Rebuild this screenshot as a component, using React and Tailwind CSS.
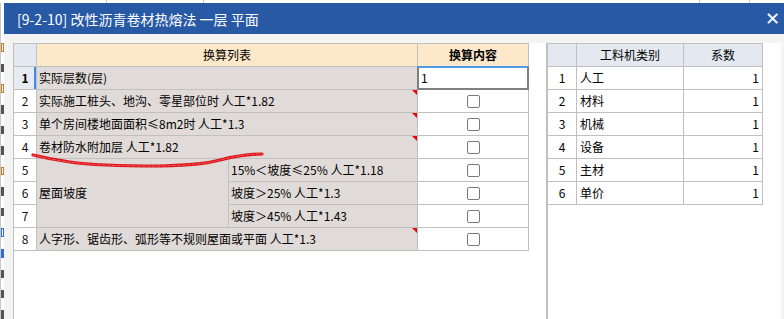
import React from "react";

const leftRows = [
  { n: 1, text: "实际层数(层)", input: true },
  { n: 2, text: "实际施工桩头、地沟、零星部位时 人工*1.82", tri: true },
  { n: 3, text: "单个房间楼地面面积≤8m2时 人工*1.3", tri: true },
  { n: 4, text: "卷材防水附加层 人工*1.82", tri: true },
];

const rightRows = [
  ["1", "人工", "1"],
  ["2", "材料", "1"],
  ["3", "机械", "1"],
  ["4", "设备", "1"],
  ["5", "主材", "1"],
  ["6", "单价", "1"],
];

function Check() {
  return <div className="w-[13px] h-[13px] border border-[#7a7a7a] rounded-[2px] bg-white" />;
}

function Tri() {
  return (
    <span className="absolute top-0 right-0 w-0 h-0 border-l-[5px] border-l-transparent border-t-[5px] border-t-[#f00000]" />
  );
}

function NumCell({ n, sel }) {
  return (
    <div
      className={
        sel
          ? "relative flex items-center justify-center bg-[#e6eaf1] font-bold text-[12px] text-black"
          : "flex items-center justify-center bg-white text-[12px] text-[#111]"
      }
    >
      {n}
      {sel && <span className="absolute right-0 top-0 bottom-0 w-[2px] bg-[#3d8ee6]" />}
    </div>
  );
}

export default function App() {
  return (
    <div className="relative w-[784px] h-[319px] overflow-hidden bg-white font-['Noto_Sans_CJK_SC',sans-serif] text-black">
      {/* background window strip */}
      <div className="h-[3px] bg-white flex">
        <div className="w-[107px] border-r border-[#c8c8c8]" />
        <div className="w-[97px] border-r border-[#c8c8c8]" />
        <div className="w-[496px] border-r border-[#c8c8c8]" />
        <div className="w-[50px] border-r border-[#c8c8c8]" />
      </div>
      <div className="flex h-[316px]">
        {/* background window left scraps */}
        <div className="w-[4px] bg-white flex flex-col items-start pt-[40px] gap-[12px] border-l border-[#c8c8c8]">
          <span className="w-[3px] h-[10px] border border-[#c57a2a]" />
          <span className="w-[3px] h-[10px] bg-[#555]" />
          <span className="w-[3px] h-[10px] border border-[#c57a2a]" />
          <span className="w-[3px] h-[10px] bg-[#555]" />
          <span className="w-[3px] h-[10px] bg-[#555]" />
          <span className="w-[3px] h-[10px] bg-[#555]" />
          <span className="w-[3px] h-[10px] border border-[#c57a2a]" />
          <span className="w-[3px] h-[10px] bg-[#555]" />
          <span className="w-[3px] h-[10px] bg-[#555]" />
          <span className="w-[3px] h-[10px] border border-[#2a6fd0]" />
          <span className="w-[3px] h-[10px] bg-[#2a6fd0]" />
          <span className="w-[3px] h-[10px] bg-[#555]" />
          <span className="w-[3px] h-[10px] bg-[#555]" />
          <span className="w-[3px] h-[10px] bg-[#555]" />
        </div>

        {/* dialog */}
        <div className="flex-1 flex flex-col">
          <div className="h-[31px] bg-[#2859a5] flex items-center justify-between pl-[13px] pr-[4px] text-white">
            <span className="text-[14px] leading-none">[9-2-10] 改性沥青卷材热熔法 一层 平面</span>
            <span className="text-[18px] leading-none font-['DejaVu_Sans',sans-serif]">✕</span>
          </div>
          <div className="flex-1 bg-[#f3f3f3] pt-[9px] pl-[9px] flex">
            {/* left panel */}
            <div className="w-[533px] bg-white border-l border-[#c0c0c0]">
              <div className="grid grid-cols-[22px_191px_188px_110px] grid-rows-[repeat(9,22px)] gap-px bg-[#c0c0c0] border-t border-r border-b border-[#c0c0c0] w-[515px] text-[12px]">
                {/* header */}
                <div className="bg-[#e4e9f1]" />
                <div className="col-span-2 bg-[#fee8ca] flex items-center justify-center">换算列表</div>
                <div className="bg-[#fee8ca] flex items-center justify-center font-bold">换算内容</div>

                {leftRows.map((r) => (
                  <React.Fragment key={r.n}>
                    <NumCell n={r.n} sel={r.n === 1} />
                    <div className="relative col-span-2 bg-[#e0dbd8] flex items-center pl-[2px] whitespace-nowrap">
                      {r.text}
                      {r.tri && <Tri />}
                    </div>
                    {r.input ? (
                      <div className="bg-white border-2 border-[#7f7f7f] border-t-[#4d9be6] flex items-center pl-[2px] -m-px">
                        1
                      </div>
                    ) : (
                      <div className="bg-white flex items-center justify-center">
                        <Check />
                      </div>
                    )}
                  </React.Fragment>
                ))}

                {/* rows 5-7 */}
                <NumCell n={5} />
                <div className="row-span-3 bg-[#e0dbd8] flex items-center pl-[2px]">屋面坡度</div>
                <div className="bg-[#e0dbd8] flex items-center pl-[2px] whitespace-nowrap">15%＜坡度≤25% 人工*1.18</div>
                <div className="bg-white flex items-center justify-center">
                  <Check />
                </div>
                <NumCell n={6} />
                <div className="bg-[#e0dbd8] flex items-center pl-[2px] whitespace-nowrap">坡度＞25% 人工*1.3</div>
                <div className="bg-white flex items-center justify-center">
                  <Check />
                </div>
                <NumCell n={7} />
                <div className="bg-[#e0dbd8] flex items-center pl-[2px] whitespace-nowrap">坡度＞45% 人工*1.43</div>
                <div className="bg-white flex items-center justify-center">
                  <Check />
                </div>

                {/* row 8 */}
                <NumCell n={8} />
                <div className="relative col-span-2 bg-[#e0dbd8] flex items-center pl-[2px] whitespace-nowrap">
                  人字形、锯齿形、弧形等不规则屋面或平面 人工*1.3
                  <Tri />
                </div>
                <div className="bg-white flex items-center justify-center">
                  <Check />
                </div>
              </div>
            </div>

            {/* splitter */}
            <div className="w-[2px] bg-[#c0c0c0]" />

            {/* right panel */}
            <div className="w-[233px] bg-white">
              <div className="grid grid-cols-[28px_106px_78px] grid-rows-[repeat(7,22px)] gap-px bg-[#c0c0c0] border-t border-r border-b border-[#c0c0c0] w-[215px] text-[12px]">
                <div className="bg-[#e4e9f1]" />
                <div className="bg-[#e4e9f1] flex items-center justify-center">工料机类别</div>
                <div className="bg-[#e4e9f1] flex items-center justify-center">系数</div>
                {rightRows.map((r) => (
                  <React.Fragment key={r[0]}>
                    <div className="bg-white flex items-center justify-center">{r[0]}</div>
                    <div className="bg-white flex items-center pl-[3px]">{r[1]}</div>
                    <div className="bg-white flex items-center justify-end pr-[3px]">{r[2]}</div>
                  </React.Fragment>
                ))}
              </div>
            </div>
          </div>
        </div>
      </div>

      {/* red hand-drawn annotation */}
      <svg className="absolute left-0 top-0 pointer-events-none" width="784" height="319" viewBox="0 0 784 319">
        <path
          d="M33 155 C 45 158, 55 160, 70 162 C 90 165, 120 166, 160 166 C 190 165, 205 164, 220 160 C 232 157, 245 154, 262 154"
          fill="none"
          stroke="#d9141a"
          strokeWidth="3.2"
          strokeLinecap="round"
        />
        <path
          d="M33 155 C 45 158, 55 160, 70 162 C 90 165, 120 166, 160 166 C 190 165, 205 164, 220 160 C 232 157, 245 154, 262 154"
          fill="none"
          stroke="#ff5a5a"
          strokeWidth="1"
          strokeDasharray="3 2"
          strokeLinecap="round"
        />
      </svg>
    </div>
  );
}
